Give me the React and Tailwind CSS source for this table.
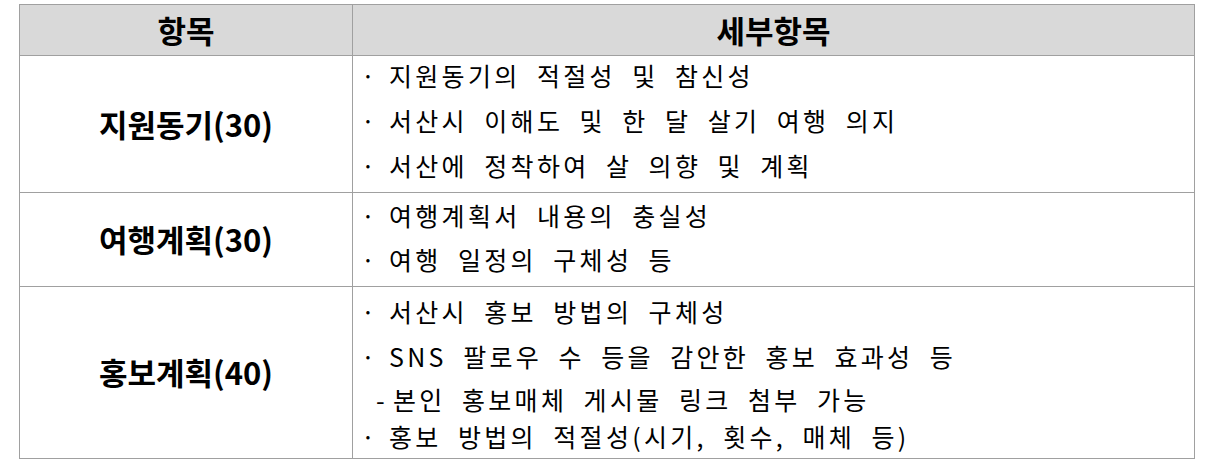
import React from 'react';

const rows = [
  {
    title: '지원동기(30)',
    height: 'h-[137px]',
    pad: '-mt-[3px]',
    lines: [
      { mark: '·', text: '지원동기의 적절성 및 참신성', lh: 'leading-[45px]' },
      { mark: '·', text: '서산시 이해도 및 한 달 살기 여행 의지', lh: 'leading-[45px]' },
      { mark: '·', text: '서산에 정착하여 살 의향 및 계획', lh: 'leading-[45px]' },
    ],
  },
  {
    title: '여행계획(30)',
    height: 'h-[94px]',
    pad: 'pt-0',
    lines: [
      { mark: '·', text: '여행계획서 내용의 충실성', lh: 'leading-[45px]' },
      { mark: '·', text: '여행 일정의 구체성 등', lh: 'leading-[42px]' },
    ],
  },
  {
    title: '홍보계획(40)',
    height: 'h-[171px]',
    pad: 'pt-[2px]',
    lines: [
      { mark: '·', text: '서산시 홍보 방법의 구체성', lh: 'leading-[45px]' },
      { mark: '·', text: 'SNS 팔로우 수 등을 감안한 홍보 효과성 등', lh: 'leading-[45px]' },
      { mark: '-', text: '본인 홍보매체 게시물 링크 첨부 가능', lh: 'leading-[41px]', dash: true },
      { mark: '·', text: '홍보 방법의 적절성(시기, 횟수, 매체 등)', lh: 'leading-[33px]' },
    ],
  },
];

const App = () => {
  return (
    <div className="w-[1217px] h-[464px] bg-white pt-[4px] pl-[19px]" style={{ fontFamily: '"Noto Sans CJK KR", "Noto Sans", sans-serif' }}>
      <div className="w-[1176px] border border-[#a0a0a0] text-black">
        {/* Header */}
        <div className="flex h-[51px] bg-[#d9d9d9] border-b border-[#a0a0a0]">
          <div className="w-[333px] border-r border-[#a0a0a0] flex items-center justify-center text-[31px] font-bold">
            항목
          </div>
          <div className="flex-1 flex items-center justify-center text-[31px] font-bold">
            세부항목
          </div>
        </div>

        {rows.map((row, i) => (
          <div
            key={row.title}
            className={`flex ${row.height} ${i < rows.length - 1 ? 'border-b border-[#a0a0a0]' : ''}`}
          >
            <div className="w-[333px] border-r border-[#a0a0a0] flex items-center justify-center text-[31px] font-bold">
              {row.title}
            </div>
            <div className="flex-1 pl-[8px] text-[25px]">
              <div className={`flex flex-col ${row.pad}`}>
                {row.lines.map((line, j) => (
                  <div key={j} className={`flex whitespace-pre ${line.lh}`}>
                    <span className={`shrink-0 ${line.dash ? 'w-[32px] pl-[15px]' : 'w-[28px]'}`}>{line.mark}</span>
                    <span className="tracking-[3.3px] [word-spacing:7.5px]">{line.text}</span>
                  </div>
                ))}
              </div>
            </div>
          </div>
        ))}
      </div>
    </div>
  );
};

export default App;
